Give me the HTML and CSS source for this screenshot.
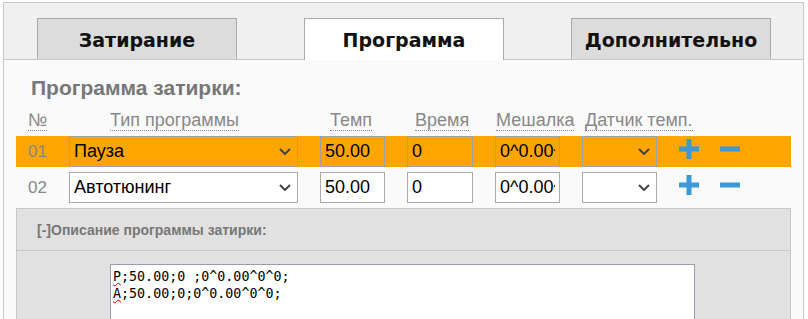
FILE: index.html
```html
<!DOCTYPE html>
<html lang="ru">
<head>
  <meta charset="UTF-8" />
  <title>Программа затирки</title>
  <link rel="stylesheet" href="styles.css">
</head>
<body>
  <div class="panel">
    <!-- tabs -->
    <div class="tabs">
      <div class="tab">Затирание</div>
      <div class="tab active">Программа</div>
      <div class="tab">Дополнительно</div>
    </div>

    <div class="content">
      <h2>Программа затирки:</h2>

      <div class="grid head">
        <span class="h-num"><u>№</u></span>
        <span class="h-type"><u>Тип программы</u></span>
        <span class="h-temp"><u>Темп</u></span>
        <span class="h-time"><u>Время</u></span>
        <span class="h-mix"><u>Мешалка</u></span>
        <span class="h-sensor"><u>Датчик темп.</u></span>
      </div>

      <div class="grid row current">
        <span class="num">01</span>
        <div class="select"><span>Пауза</span><svg width="12" height="7" viewBox="0 0 12 7"><path d="M1 1l5 5 5-5" fill="none" stroke="#444" stroke-width="2"/></svg></div>
        <input type="text" value="50.00">
        <input type="text" value="0">
        <input type="text" value="0^0.00^0^0">
        <div class="select"><span></span><svg width="12" height="7" viewBox="0 0 12 7"><path d="M1 1l5 5 5-5" fill="none" stroke="#444" stroke-width="2"/></svg></div>
        <div class="actions">
          <svg width="20" height="20" viewBox="0 0 20 20"><rect x="7.5" y="0" width="5" height="20" fill="#3b98d9"/><rect x="0" y="7.5" width="20" height="5" fill="#3b98d9"/></svg>
          <svg width="20" height="20" viewBox="0 0 20 20"><rect x="0" y="7.5" width="20" height="5" fill="#3b98d9"/></svg>
        </div>
      </div>

      <div class="grid row">
        <span class="num">02</span>
        <div class="select"><span>Автотюнинг</span><svg width="12" height="7" viewBox="0 0 12 7"><path d="M1 1l5 5 5-5" fill="none" stroke="#444" stroke-width="2"/></svg></div>
        <input type="text" value="50.00">
        <input type="text" value="0">
        <input type="text" value="0^0.00^0^0">
        <div class="select"><span></span><svg width="12" height="7" viewBox="0 0 12 7"><path d="M1 1l5 5 5-5" fill="none" stroke="#444" stroke-width="2"/></svg></div>
        <div class="actions">
          <svg width="20" height="20" viewBox="0 0 20 20"><rect x="7.5" y="0" width="5" height="20" fill="#3b98d9"/><rect x="0" y="7.5" width="20" height="5" fill="#3b98d9"/></svg>
          <svg width="20" height="20" viewBox="0 0 20 20"><rect x="0" y="7.5" width="20" height="5" fill="#3b98d9"/></svg>
        </div>
      </div>

      <!-- program description -->
      <div class="desc">
        <div class="desc-head">[-]Описание программы затирки:</div>
        <div class="desc-body">
          <div class="desc-text"><span class="typo">P</span>;50.00;0 ;0^0.00^0^0;<br><span class="typo">A</span>;50.00;0;0^0.00^0^0;</div>
        </div>
      </div>
    </div>
  </div>
</body>
</html>
```

FILE: styles.css
```css
body { margin: 0; background: #fff; font-family: "Liberation Sans", Arial, sans-serif; overflow: hidden; }
.panel { margin: 2px 4px 0 3px; border: 1px solid #c8c8c8; border-bottom: none; background: #f0f0f0; }

.tabs { display: flex; gap: 67px; height: 41px; padding: 15px 0 0 33px; border-bottom: 1px solid #c8c8c8; }
.tab { width: 198px; height: 40px; border: 1px solid #aaa; border-bottom: none; background: #dcdcdc;
  font: bold 19px "DejaVu Sans", Verdana, sans-serif; color: #111; text-align: center; line-height: 42px; }
.tab.active { background: #fff; height: 41px; margin-bottom: -1px; position: relative; }

.content { background: #fafafa; padding: 16px 12px 0 12px; height: 243px; overflow: hidden; }
h2 { margin: 0 0 10px 15px; font-size: 21px; line-height: 24px; color: #777; }

.grid { display: grid; grid-template-columns: 31px 229px 65px 66px 65px 75px 1fr; column-gap: 22px; }
.head { font-size: 18px; color: #888; height: 26px; white-space: nowrap; }
.head u { text-decoration: none; border-bottom: 1px dotted #888; }
.h-num { padding-left: 12px; }
.h-type { padding-left: 41px; }
.h-temp { padding-left: 10px; }
.h-time { padding-left: 8px; }
.h-mix { padding-left: 1px; }
.h-sensor { padding-left: 3px; }

.row { height: 31px; margin-bottom: 5px; }
.row.current { background: #ffa500; }
.num { padding-left: 12px; font-size: 17px; color: #888; line-height: 31px; }
.select, .row input { box-sizing: border-box; height: 31px; border: 1px solid #aaa; background: #fff; }
.current .select, .current input { background: transparent; border-color: #a0a0a0; }
.select { display: flex; align-items: center; justify-content: space-between; padding: 0 6px 0 4px; font-size: 18px; color: #000; }
.row input { width: 100%; margin: 0; padding: 0 4px; font: 18px "Liberation Sans", Arial, sans-serif; color: #000; outline: none; }
.actions { display: flex; gap: 21px; padding-top: 3px; }
.actions svg { display: block; }

.desc { border: 1px solid #c8c8c8; background: #e0e1e0; height: 140px; }
.desc-head { height: 41px; line-height: 43px; padding-left: 20px; border-bottom: 1px solid #c8c8c8;
  font-weight: bold; font-size: 14px; color: #777; }
.desc-body { padding: 13px 0 0 93px; }
.desc-text { box-sizing: border-box; width: 585px; height: 90px; border: 1px solid #9b9bab; background: #fff;
  padding: 3px 2px; font: 13.33px/17px "DejaVu Sans Mono", monospace; color: #000; }
.typo { text-decoration: underline wavy #e00; text-decoration-thickness: 1px; }
```
